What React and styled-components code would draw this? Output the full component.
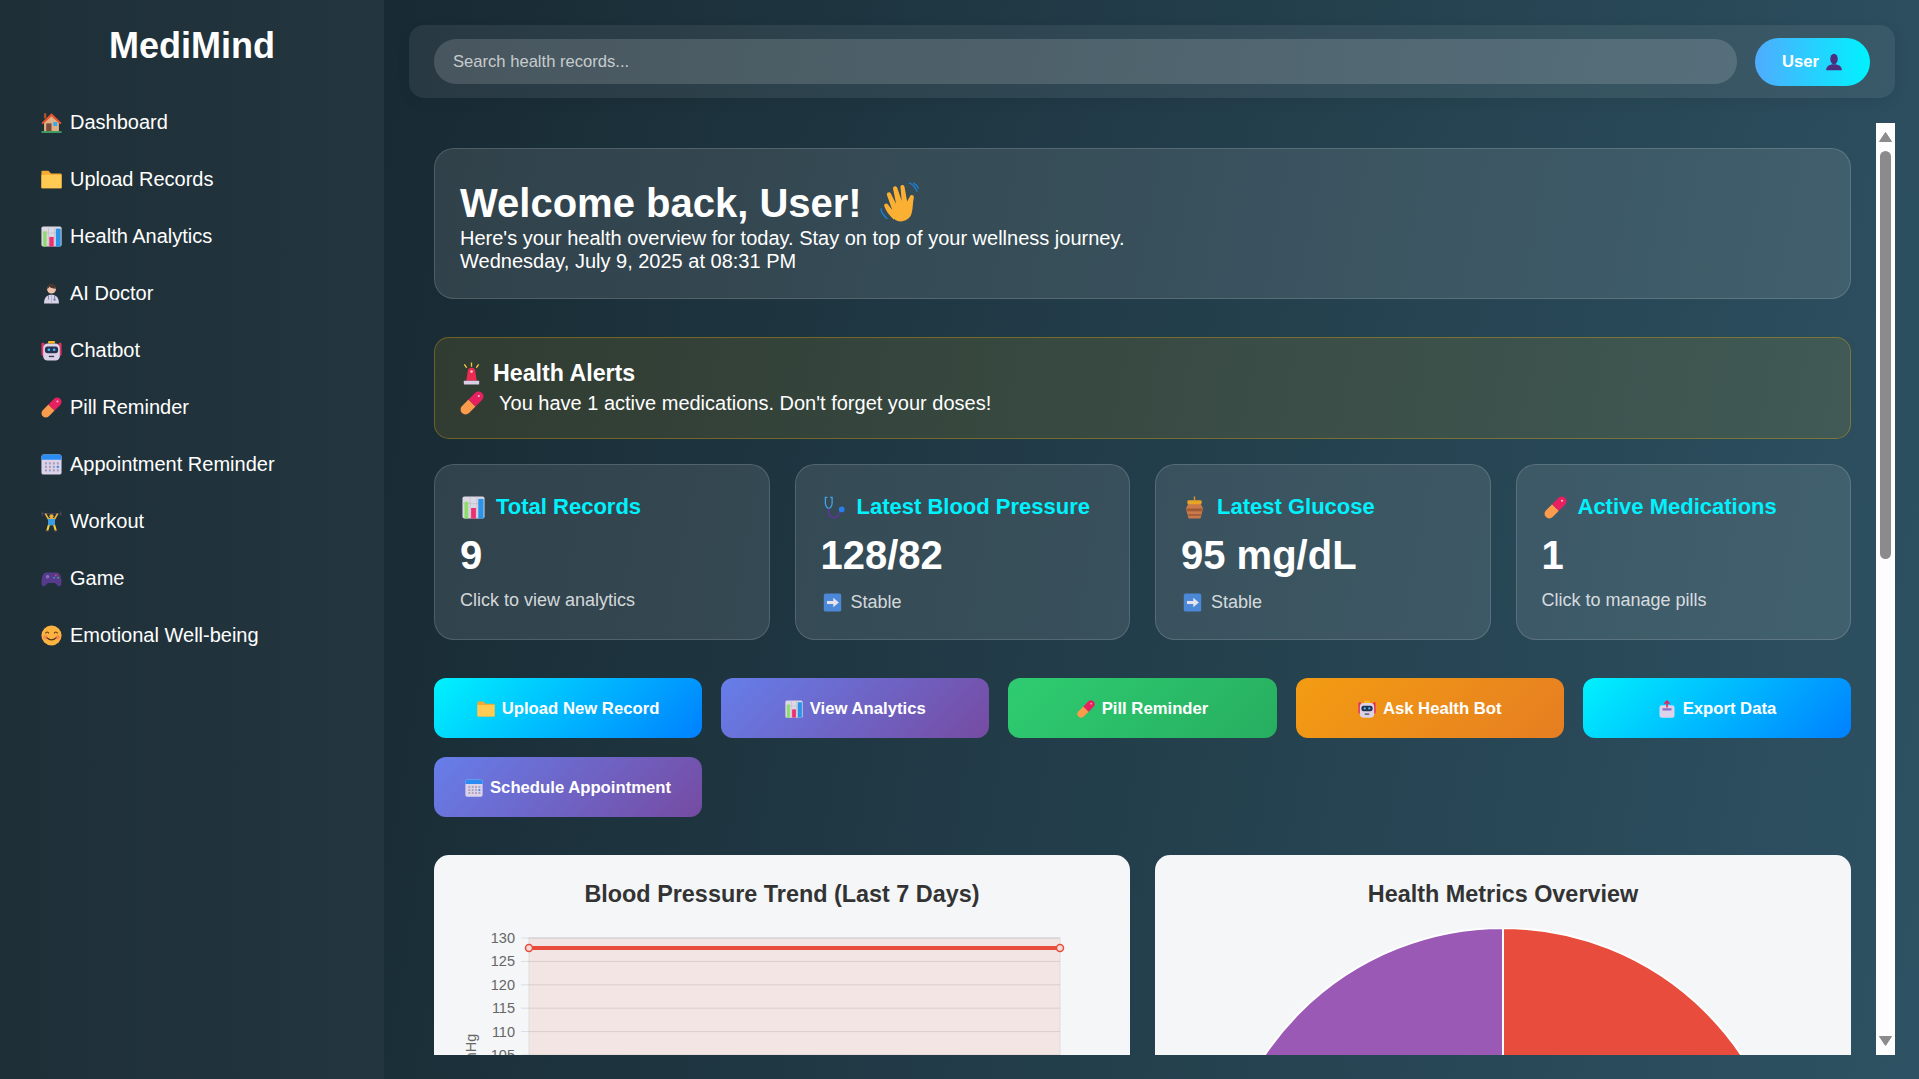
import React from 'react';
import styled, { createGlobalStyle } from 'styled-components';

const GlobalStyle = createGlobalStyle`
  * { box-sizing: border-box; }
  html, body { margin: 0; height: 100%; overflow: hidden; }
  body {
    font-family: "Liberation Sans", Arial, sans-serif;
    color: #fff;
    background: #1a2c35;
  }
`;

const Page = styled.div`
  display: flex;
  height: 1079px;
`;

const Sidebar = styled.aside`
  flex: 0 0 384px;
  background: linear-gradient(90deg, #1e2f38, #23353e);
  padding: 20px 30px;
`;

const Logo = styled.h1`
  margin: 0 0 23px;
  font-size: 36px;
  line-height: 51px;
  font-weight: 700;
  text-align: center;
`;

const NavList = styled.nav`
  display: flex;
  flex-direction: column;
`;

const NavItem = styled.a`
  display: flex;
  align-items: center;
  gap: 8px;
  height: 57px;
  padding-left: 11px;
  font-size: 20px;
  color: #fff;
`;

const Main = styled.main`
  flex: 1;
  min-width: 0;
  display: flex;
  flex-direction: column;
  padding: 25px 24px 24px 25px;
  gap: 25px;
  background: linear-gradient(100deg, #182a33, #2e5263);
`;

const TopBar = styled.header`
  flex: 0 0 73px;
  display: flex;
  align-items: center;
  gap: 18px;
  padding: 0 25px;
  border-radius: 15px;
  background: rgba(255, 255, 255, 0.07);
  box-shadow: 0 4px 15px rgba(0, 0, 0, 0.06);
`;

const SearchInput = styled.input`
  flex: 1;
  height: 45px;
  padding: 0 19px;
  border: none;
  outline: none;
  border-radius: 22px;
  background: rgba(255, 255, 255, 0.15);
  color: #fff;
  font-family: inherit;
  font-size: 16.6px;
  &::placeholder { color: rgba(255, 255, 255, 0.7); }
`;

const UserButton = styled.button`
  flex: 0 0 115px;
  height: 48px;
  display: flex;
  align-items: center;
  justify-content: center;
  gap: 6px;
  padding: 1px 0 0;
  border: none;
  border-radius: 24px;
  background: linear-gradient(90deg, #4facfe, #00f2fe);
  color: #fff;
  font-family: inherit;
  font-size: 16.6px;
  font-weight: 700;
`;

const ScrollArea = styled.div`
  flex: 1;
  min-height: 0;
  display: flex;
`;

const ScrollClip = styled.div`
  flex: 1;
  min-width: 0;
  overflow: hidden;
`;

const ScrollRail = styled.div`
  flex: 0 0 19px;
  display: flex;
  flex-direction: column;
  align-items: center;
  background: #fdfdfd;
`;

const RailArrow = styled.div`
  flex: 0 0 28px;
  display: flex;
  align-items: center;
  justify-content: center;
  color: #8b8b8b;
`;

const RailTrack = styled.div`
  flex: 1;
  align-self: stretch;
  display: flex;
  justify-content: center;
`;

const RailThumb = styled.div`
  width: 11px;
  height: 408px;
  border-radius: 6px;
  background: #8b8b8b;
`;

const Content = styled.div`
  padding: 25px;
  display: flex;
  flex-direction: column;
`;

const WelcomeCard = styled.section`
  height: 151px;
  margin-bottom: 38px;
  padding: 31px 25px 0;
  border: 1px solid rgba(255, 255, 255, 0.15);
  border-radius: 20px;
  background: rgba(255, 255, 255, 0.1);
`;

const WelcomeTitle = styled.h2`
  display: flex;
  align-items: center;
  gap: 18px;
  margin: 0 0 1px;
  height: 46px;
  font-size: 40px;
  font-weight: 700;
`;

const WelcomeLine = styled.p`
  margin: 0;
  font-size: 20px;
  line-height: 23px;
`;

const AlertCard = styled.section`
  height: 102px;
  margin-bottom: 25px;
  padding: 21px 25px 0;
  border: 1px solid rgba(255, 193, 7, 0.3);
  border-radius: 15px;
  background: rgba(255, 193, 7, 0.1);
`;

const AlertTitle = styled.h3`
  display: flex;
  align-items: center;
  gap: 10px;
  margin: 0 0 1px;
  height: 28px;
  font-size: 23.2px;
  font-weight: 700;
`;

const AlertText = styled.p`
  display: flex;
  align-items: center;
  gap: 15px;
  margin: 0;
  height: 30px;
  font-size: 20px;
`;

const StatGrid = styled.div`
  display: grid;
  grid-template-columns: repeat(4, minmax(0, 1fr));
  gap: 25px;
  margin-bottom: 38px;
`;

const StatCard = styled.div`
  height: 176px;
  padding: 27px 25px 0;
  border: 1px solid rgba(255, 255, 255, 0.15);
  border-radius: 20px;
  background: rgba(255, 255, 255, 0.1);
`;

const StatTitle = styled.h3`
  display: flex;
  align-items: center;
  gap: 11px;
  margin: 0;
  padding-left: 2px;
  height: 30px;
  font-size: 22px;
  font-weight: 700;
  color: #00f2fe;
`;

const StatValue = styled.div`
  margin-top: 10px;
  height: 46px;
  font-size: 40px;
  line-height: 46px;
  font-weight: 700;
`;

const StatNote = styled.div`
  display: flex;
  align-items: center;
  gap: 9px;
  margin-top: ${({ $trend }) => ($trend ? '12px' : '10px')};
  padding-left: ${({ $trend }) => ($trend ? '2px' : '0')};
  height: 24px;
  font-size: 18px;
  color: rgba(255, 255, 255, 0.8);
`;

const ActionGrid = styled.div`
  display: grid;
  grid-template-columns: repeat(5, minmax(0, 1fr));
  gap: 19.2px;
  margin-bottom: 38px;
`;

const actionFills = {
  cyan: 'linear-gradient(135deg, #00f2fe, #0080ff)',
  violet: 'linear-gradient(135deg, #667eea, #764ba2)',
  green: 'linear-gradient(135deg, #2ecc71, #27ae60)',
  orange: 'linear-gradient(135deg, #f39c12, #e67e22)',
};

const ActionButton = styled.button`
  height: 60px;
  display: flex;
  align-items: center;
  justify-content: center;
  gap: 7px;
  padding: 2px 0 0;
  border: none;
  border-radius: 12px;
  background: ${({ $fill }) => actionFills[$fill]};
  color: #fff;
  font-family: inherit;
  font-size: 16.7px;
  font-weight: 700;
`;

const ChartGrid = styled.div`
  display: grid;
  grid-template-columns: repeat(2, minmax(0, 1fr));
  gap: 25px;
`;

const ChartCard = styled.div`
  height: 660px;
  padding: 25px;
  border-radius: 15px;
  background: #f4f6f8;
`;

const ChartTitle = styled.h3`
  margin: 0;
  height: 28px;
  line-height: 28px;
  text-align: center;
  font-size: 23.4px;
  font-weight: 700;
  color: #333;
`;

const ChartSvg = styled.svg`
  display: block;
  margin: 20px 0 0 -25px;
  width: 696px;
  height: 560px;
  font-family: "Liberation Sans", Arial, sans-serif;
`;

const Emoji = ({ name, size = 22 }) => (
  <svg width={size} height={size} viewBox="0 0 24 24" style={{ flex: 'none' }}>
    {emojiArt[name]}
  </svg>
);

const emojiArt = {
  house: (
    <>
      <path d="M3.500 11 12 3l8.500 8v11h-17z" fill="#e0b184" />
      <path d="M0.500 12.500 12 1.500l11.500 11-1.500 1.500L12 5 2 14z" fill="#e8552f" />
      <rect x="3.500" y="1.500" width="2.500" height="6" fill="#b5532c" />
      <rect x="6" y="13" width="6" height="9" fill="#7a4a3a" />
      <rect x="14" y="11.500" width="4.500" height="4.500" fill="#35a9f0" />
      <rect x="0.500" y="22" width="23" height="1.800" fill="#41b36a" />
    </>
  ),
  folder: (
    <>
      <path d="M0.500 3a1 1 0 0 1 1-1h7l3 3h11a1 1 0 0 1 1 1v15a1 1 0 0 1-1 1h-21a1 1 0 0 1-1-1z" fill="#f4a92f" />
      <path d="M0.500 6.500h23V21a1 1 0 0 1-1 1h-21a1 1 0 0 1-1-1z" fill="#ffcb52" />
    </>
  ),
  chart: (
    <>
      <rect x="0.500" y="0.500" width="23" height="23" rx="2" fill="#dcd8e4" />
      <path d="M8.500 0.500v23M15.500 0.500v23M0.500 8h23" stroke="#b9b4c4" strokeWidth=".6" />
      <rect x="2.500" y="6" width="4" height="17.500" fill="#8fdc6c" />
      <rect x="9.500" y="12.500" width="5" height="11" fill="#ec2f71" />
      <rect x="17" y="3" width="5.500" height="20.500" fill="#2b93e8" />
    </>
  ),
  doctor: (
    <>
      <path d="M3.500 23.500c0-7 3.500-10 8.500-10s8.500 3 8.500 10z" fill="#d8d4e6" />
      <circle cx="12" cy="7" r="5" fill="#eec1a8" />
      <path d="M7 6.500c0-7.500 10-7.500 10 0-3.500 0-6.500-1-7.500-2.500-.5 1.500-1 2.500-2.500 2.500z" fill="#4a352f" />
      <path d="M8.500 14v5m7-5v4" stroke="#6a78b8" strokeWidth="1" fill="none" />
      <circle cx="15.500" cy="19" r="1.300" fill="#6a78b8" />
      <path d="M12 14v9.500" stroke="#a9a4bf" strokeWidth=".7" />
    </>
  ),
  robot: (
    <>
      <rect x="0.500" y="3" width="3.500" height="15" rx="1.500" fill="#e0335f" />
      <rect x="20" y="3" width="3.500" height="15" rx="1.500" fill="#e0335f" />
      <rect x="2.500" y="4" width="19" height="19.500" rx="5" fill="#dcd2e8" />
      <rect x="4.500" y="7.500" width="15" height="7.500" rx="3" fill="#26324f" />
      <circle cx="9" cy="11.200" r="1.500" fill="#45c0f5" />
      <circle cx="15" cy="11.200" r="1.500" fill="#45c0f5" />
      <rect x="9" y="18" width="6" height="1.600" fill="#3d3a52" />
      <rect x="8" y="1" width="8" height="3" rx="1" fill="#f4b528" />
    </>
  ),
  pill: (
    <>
      <path d="M8.500 8.500 15.500 15.500 9 22A4.900 4.900 0 0 1 2 15z" fill="#fb9b4c" />
      <path d="M8.500 8.500 15 2A4.900 4.900 0 0 1 22 9L15.500 15.500z" fill="#e9205f" />
      <circle cx="18.800" cy="5" r="1.100" fill="#ffc3d6" />
    </>
  ),
  calendar: (
    <>
      <rect x="0.500" y="0.500" width="23" height="23" rx="2.500" fill="#dcd3ea" />
      <path d="M0.500 6.500V3A2.500 2.500 0 0 1 3 0.500h18A2.500 2.500 0 0 1 23.500 3v3.500z" fill="#2b8cf4" />
      {[4.500, 9, 13.500, 18].map((x) =>
        [9.500, 13.500, 17.500].map((y) => (
          <rect key={`${x}-${y}`} x={x} y={y} width="2.400" height="2.400" fill={x === 18 && y === 13.500 ? '#2b8cf4' : '#a79fb8'} />
        ))
      )}
    </>
  ),
  lifter: (
    <>
      <path d="M0.500 3h23" stroke="#4a4458" strokeWidth="1.200" />
      <path d="M1.500 0.500v5M22.500 0.500v5" stroke="#4a4458" strokeWidth="1.500" />
      <path d="M5 3l3.500 6h7L19 3" stroke="#eeb23c" strokeWidth="2" fill="none" />
      <circle cx="12" cy="6" r="2.400" fill="#eeb23c" />
      <rect x="8" y="9" width="8" height="7.500" fill="#3d9be0" />
      <path d="M9 16l-2 7M15 16l2 7" stroke="#f2cb3a" strokeWidth="2.400" />
      <path d="M4.500 23h5M14.500 23h5" stroke="#3a3248" strokeWidth="1.600" />
    </>
  ),
  game: (
    <>
      <path d="M6 5h12c3 0 4.800 3.500 5.300 9 .4 5-.7 7-2.300 7-2 0-3-3-5-4H8c-2 1-3 4-5 4-1.600 0-2.700-2-2.300-7C1.200 8.500 3 5 6 5z" fill="#563a8c" />
      <circle cx="7.500" cy="10" r="2" fill="#8a6fc0" />
      <circle cx="17" cy="8.500" r="1" fill="#e2504f" />
      <circle cx="19.500" cy="11" r="1" fill="#45b36a" />
      <circle cx="15" cy="11" r="1" fill="#3d9be0" />
    </>
  ),
  smile: (
    <>
      <circle cx="12" cy="12" r="11.500" fill="#fcb33f" />
      <path d="M5 9.500q2-3 4 0M15 9.500q2-3 4 0" stroke="#5a3a22" strokeWidth="1.300" fill="none" />
      <path d="M6 14q6 6 12 0" stroke="#5a3a22" strokeWidth="1.400" fill="none" />
      <circle cx="5" cy="14" r="2.500" fill="#f3725a" opacity=".6" />
      <circle cx="19" cy="14" r="2.500" fill="#f3725a" opacity=".6" />
    </>
  ),
  wave: (
    <>
      <path d="M8 21.500C5 19 3.500 16.500 2.500 14c-.5-1.500 1.200-2.300 2.200-1l2.300 3-3-8.500c-.5-1.600 1.500-2.300 2.200-.9l3 6L7.500 4c-.4-1.600 1.800-2.200 2.400-.6l2.500 7.500-.7-8c-.1-1.500 2-1.700 2.300-.2l1.500 8.500 1.600-3c.8-1.400 2.600-.6 2.200 1-.7 3-.3 5.500-1.300 9-1.200 4-7 6-10 2.800z" fill="#fbb034" />
      <path d="M16.500.5c1.800.5 4 2.500 4.700 5M19 .5c1.200.6 2.500 1.800 3 3.200" stroke="#1d7fd1" strokeWidth=".8" fill="none" />
      <path d="M0.500 15c.2 2 1.500 4.500 3.700 6M2 18.500c.4.800 1 1.500 1.800 2.300" stroke="#1d7fd1" strokeWidth=".8" fill="none" />
    </>
  ),
  siren: (
    <>
      <path d="M12 .5v4.500M4.500 2.500l2.500 3.500M19.500 2.500L17 6" stroke="#f3c53c" strokeWidth="1.400" />
      <path d="M6.500 19.500 8 10a4 4 0 0 1 8 0l1.500 9.500z" fill="#ea2b52" />
      <circle cx="12" cy="10" r="1.400" fill="#ffb7c7" />
      <rect x="4" y="19.500" width="16" height="4" rx=".6" fill="#d9cfe8" />
    </>
  ),
  stethoscope: (
    <>
      <path d="M4.500 1.500H2.500v6c0 3 2 5.500 3.500 5.500s3.500-2.500 3.500-5.500v-6H7.500" stroke="#45a6ec" strokeWidth="1.300" fill="none" />
      <path d="M6 13v4c0 3 2 5.500 5 5.500 4 0 5.500-3 6.500-6.500" stroke="#6a2fb0" strokeWidth="1.300" fill="none" />
      <circle cx="19.500" cy="14" r="3" fill="#2b7de9" />
    </>
  ),
  honey: (
    <>
      <path d="M5.500 8h13l2.500 5-2.500 9.500a1 1 0 0 1-1 1h-11a1 1 0 0 1-1-1L3 13z" fill="#c9794a" />
      <path d="M3.300 13h17.400l-.8 3H4.100zM5.200 19h13.600l-.4 1.500H5.600z" fill="#9c5a36" />
      <rect x="4.500" y="4.500" width="15" height="4" rx="1.500" fill="#e9a326" />
      <path d="M12 .5v4" stroke="#d9932a" strokeWidth="1.500" />
    </>
  ),
  arrow: (
    <>
      <rect x="1" y="0.500" width="22" height="23" rx="2.500" fill="#4c88d8" />
      <path d="M5 10h8V6l7 6-7 6v-4H5z" fill="#e6e3ee" />
    </>
  ),
  bust: (
    <>
      <ellipse cx="12" cy="8" rx="5" ry="7" fill="#4d2f80" />
      <path d="M1.500 23c0-5 4-8 10.500-8s10.500 3 10.500 8z" fill="#4d2f80" />
    </>
  ),
  outbox: (
    <>
      <rect x="2" y="7" width="20" height="16.500" rx="3" fill="#dcd3ea" />
      <rect x="6" y="11" width="12" height="3" fill="#8b6fc8" />
      <path d="M12 10V2M8.500 5 12 1.500 15.500 5" stroke="#e9205f" strokeWidth="2" fill="none" />
    </>
  ),
};

const navItems = [
  ['house', 'Dashboard'],
  ['folder', 'Upload Records'],
  ['chart', 'Health Analytics'],
  ['doctor', 'AI Doctor'],
  ['robot', 'Chatbot'],
  ['pill', 'Pill Reminder'],
  ['calendar', 'Appointment Reminder'],
  ['lifter', 'Workout'],
  ['game', 'Game'],
  ['smile', 'Emotional Well-being'],
];

const stats = [
  { icon: 'chart', title: 'Total Records', value: '9', note: 'Click to view analytics' },
  { icon: 'stethoscope', title: 'Latest Blood Pressure', value: '128/82', note: 'Stable', trend: true },
  { icon: 'honey', title: 'Latest Glucose', value: '95 mg/dL', note: 'Stable', trend: true },
  { icon: 'pill', title: 'Active Medications', value: '1', note: 'Click to manage pills' },
];

const actions = [
  { icon: 'folder', label: 'Upload New Record', fill: 'cyan' },
  { icon: 'chart', label: 'View Analytics', fill: 'violet' },
  { icon: 'pill', label: 'Pill Reminder', fill: 'green' },
  { icon: 'robot', label: 'Ask Health Bot', fill: 'orange' },
  { icon: 'outbox', label: 'Export Data', fill: 'cyan' },
  { icon: 'calendar', label: 'Schedule Appointment', fill: 'violet' },
];

const ticks = [130, 125, 120, 115, 110, 105, 100, 95, 90, 85, 80];

const TrendChart = () => (
  <ChartSvg viewBox="0 0 696 560">
    <rect x="95" y="10" width="531" height="540" fill="#e74c3c" fillOpacity="0.1" />
    <rect x="95" y="10" width="531" height="540" fill="none" stroke="#ddd" />
    {ticks.map((tick, i) => (
      <g key={tick}>
        <line x1="87" x2="626" y1={10 + i * 23.4} y2={10 + i * 23.4} stroke="#000" strokeOpacity="0.1" />
        <text x="81" y={15 + i * 23.4} textAnchor="end" fontSize="14.500" fill="#666">{tick}</text>
      </g>
    ))}
    <line x1="95" x2="626" y1="20" y2="20" stroke="#e74c3c" strokeWidth="4" />
    <circle cx="95" cy="20" r="3.500" fill="#f4dcd9" stroke="#e74c3c" strokeWidth="1.500" />
    <circle cx="626" cy="20" r="3.500" fill="#f4dcd9" stroke="#e74c3c" strokeWidth="1.500" />
    <text transform="translate(42 127) rotate(-90)" textAnchor="middle" fontSize="14.500" fill="#666">mmHg</text>
  </ChartSvg>
);

const MetricsPie = () => (
  <ChartSvg viewBox="0 0 696 560">
    <path d="M348 0A287 287 0 0 1 348 574z" fill="#e74c3c" stroke="#fff" strokeWidth="2" />
    <path d="M348 0A287 287 0 0 0 348 574z" fill="#9b59b6" stroke="#fff" strokeWidth="2" />
  </ChartSvg>
);

const ArrowGlyph = ({ down }) => (
  <svg width="13" height="10" viewBox="0 0 13 10">
    <path d={down ? 'M6.500 9.500 12.500.5H.5z' : 'M6.500.5 12.500 9.500H.5z'} fill="currentColor" stroke="currentColor" strokeLinejoin="round" />
  </svg>
);

const App = () => (
  <>
    <GlobalStyle />
    <Page>
      <Sidebar>
        <Logo>MediMind</Logo>
        <NavList>
          {navItems.map(([icon, label]) => (
            <NavItem key={label}>
              <Emoji name={icon} size={21} />
              {label}
            </NavItem>
          ))}
        </NavList>
      </Sidebar>
      <Main>
        <TopBar>
          <SearchInput placeholder="Search health records..." />
          <UserButton>
            User <Emoji name="bust" size={18} />
          </UserButton>
        </TopBar>
        <ScrollArea>
          <ScrollClip>
            <Content>
              <WelcomeCard>
                <WelcomeTitle>
                  Welcome back, User! <Emoji name="wave" size={42} />
                </WelcomeTitle>
                <WelcomeLine>Here's your health overview for today. Stay on top of your wellness journey.</WelcomeLine>
                <WelcomeLine>Wednesday, July 9, 2025 at 08:31 PM</WelcomeLine>
              </WelcomeCard>
              <AlertCard>
                <AlertTitle>
                  <Emoji name="siren" size={23} /> Health Alerts
                </AlertTitle>
                <AlertText>
                  <Emoji name="pill" size={24} /> You have 1 active medications. Don't forget your doses!
                </AlertText>
              </AlertCard>
              <StatGrid>
                {stats.map((stat) => (
                  <StatCard key={stat.title}>
                    <StatTitle>
                      <Emoji name={stat.icon} size={23} />
                      {stat.title}
                    </StatTitle>
                    <StatValue>{stat.value}</StatValue>
                    <StatNote $trend={stat.trend}>
                      {stat.trend && <Emoji name="arrow" size={19} />}
                      {stat.note}
                    </StatNote>
                  </StatCard>
                ))}
              </StatGrid>
              <ActionGrid>
                {actions.map((action) => (
                  <ActionButton key={action.label} $fill={action.fill}>
                    <Emoji name={action.icon} size={18} />
                    {action.label}
                  </ActionButton>
                ))}
              </ActionGrid>
              <ChartGrid>
                <ChartCard>
                  <ChartTitle>Blood Pressure Trend (Last 7 Days)</ChartTitle>
                  <TrendChart />
                </ChartCard>
                <ChartCard>
                  <ChartTitle>Health Metrics Overview</ChartTitle>
                  <MetricsPie />
                </ChartCard>
              </ChartGrid>
            </Content>
          </ScrollClip>
          <ScrollRail>
            <RailArrow>
              <ArrowGlyph />
            </RailArrow>
            <RailTrack>
              <RailThumb />
            </RailTrack>
            <RailArrow>
              <ArrowGlyph down />
            </RailArrow>
          </ScrollRail>
        </ScrollArea>
      </Main>
    </Page>
  </>
);

export default App;
